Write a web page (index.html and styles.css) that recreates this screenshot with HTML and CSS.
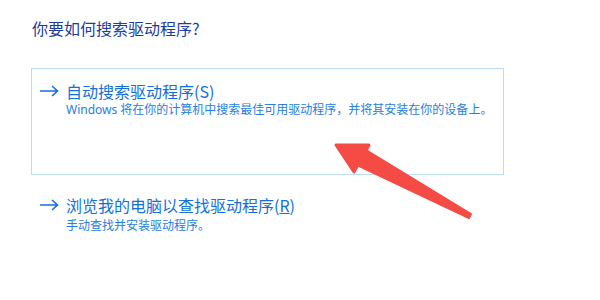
FILE: index.html
```html
<!DOCTYPE html>
<html lang="zh-CN">
<head>
<meta charset="utf-8">
<link rel="stylesheet" href="styles.css">
</head>
<body>
<div class="page">
  <h1 class="title">你要如何搜索驱动程序?</h1>
  <div class="option option-boxed">
    <div class="option-head">
      <svg class="go" width="20" height="12" viewBox="0 0 20 12"><path d="M1 6H18.5M13 1L18.5 6L13 11" fill="none" stroke="#1470d6" stroke-width="1.6"/></svg>
      <span class="option-title">自动搜索驱动程序(S)</span>
    </div>
    <div class="option-desc">Windows 将在你的计算机中搜索最佳可用驱动程序，并将其安装在你的设备上。</div>
  </div>
  <div class="option option-plain">
    <div class="option-head">
      <svg class="go" width="20" height="12" viewBox="0 0 20 12"><path d="M1 6H18.5M13 1L18.5 6L13 11" fill="none" stroke="#1470d6" stroke-width="1.6"/></svg>
      <span class="option-title">浏览我的电脑以查找驱动程序(<u>R</u>)</span>
    </div>
    <div class="option-desc">手动查找并安装驱动程序。</div>
  </div>
</div>
<svg class="annot" width="600" height="300" viewBox="0 0 600 300">
  <polygon points="336,145 369,145 354,172" fill="#f44b45" stroke="#f44b45" stroke-width="3" stroke-linejoin="round"/>
  <polygon points="357,165 366,150 471,214 469,218" fill="#f44b45" stroke="#f44b45" stroke-width="2" stroke-linejoin="round"/>
</svg>
</body>
</html>
```
FILE: styles.css
```css
html, body {
  margin: 0;
  padding: 0;
  background: #ffffff;
  width: 600px;
  height: 300px;
  overflow: hidden;
  font-family: "Noto Sans CJK SC", "Segoe UI", "Noto Sans", sans-serif;
}
.page {
  padding: 17px 0 0 31px;
}
.title {
  margin: 0 0 0 1px;
  font-size: 16px;
  line-height: 22px;
  font-weight: normal;
  color: #1d3c9e;
}
.option {
  width: 473px;
  box-sizing: border-box;
  padding: 0 0 0 7px;
  border: 1px solid transparent;
}
.option-boxed {
  margin-top: 29px;
  height: 107px;
  padding-top: 12px;
  border-color: #bcdcf5;
}
.option-plain {
  margin-top: 19px;
}
.option-head {
  display: flex;
  align-items: center;
  gap: 7px;
  height: 20px;
}
.go {
  display: block;
  flex: none;
}
.option-title {
  font-size: 16px;
  line-height: 20px;
  color: #1470d6;
}
.option-title u {
  text-underline-offset: 1px;
}
.option-desc {
  margin-top: 1px;
  padding-left: 27px;
  font-size: 12px;
  line-height: 16px;
  color: #2680dc;
  font-family: "Noto Sans", "Noto Sans CJK SC", sans-serif;
}
.option-plain .option-desc {
  margin-top: 3px;
}
.annot {
  position: absolute;
  left: 0;
  top: 0;
  pointer-events: none;
}
```
